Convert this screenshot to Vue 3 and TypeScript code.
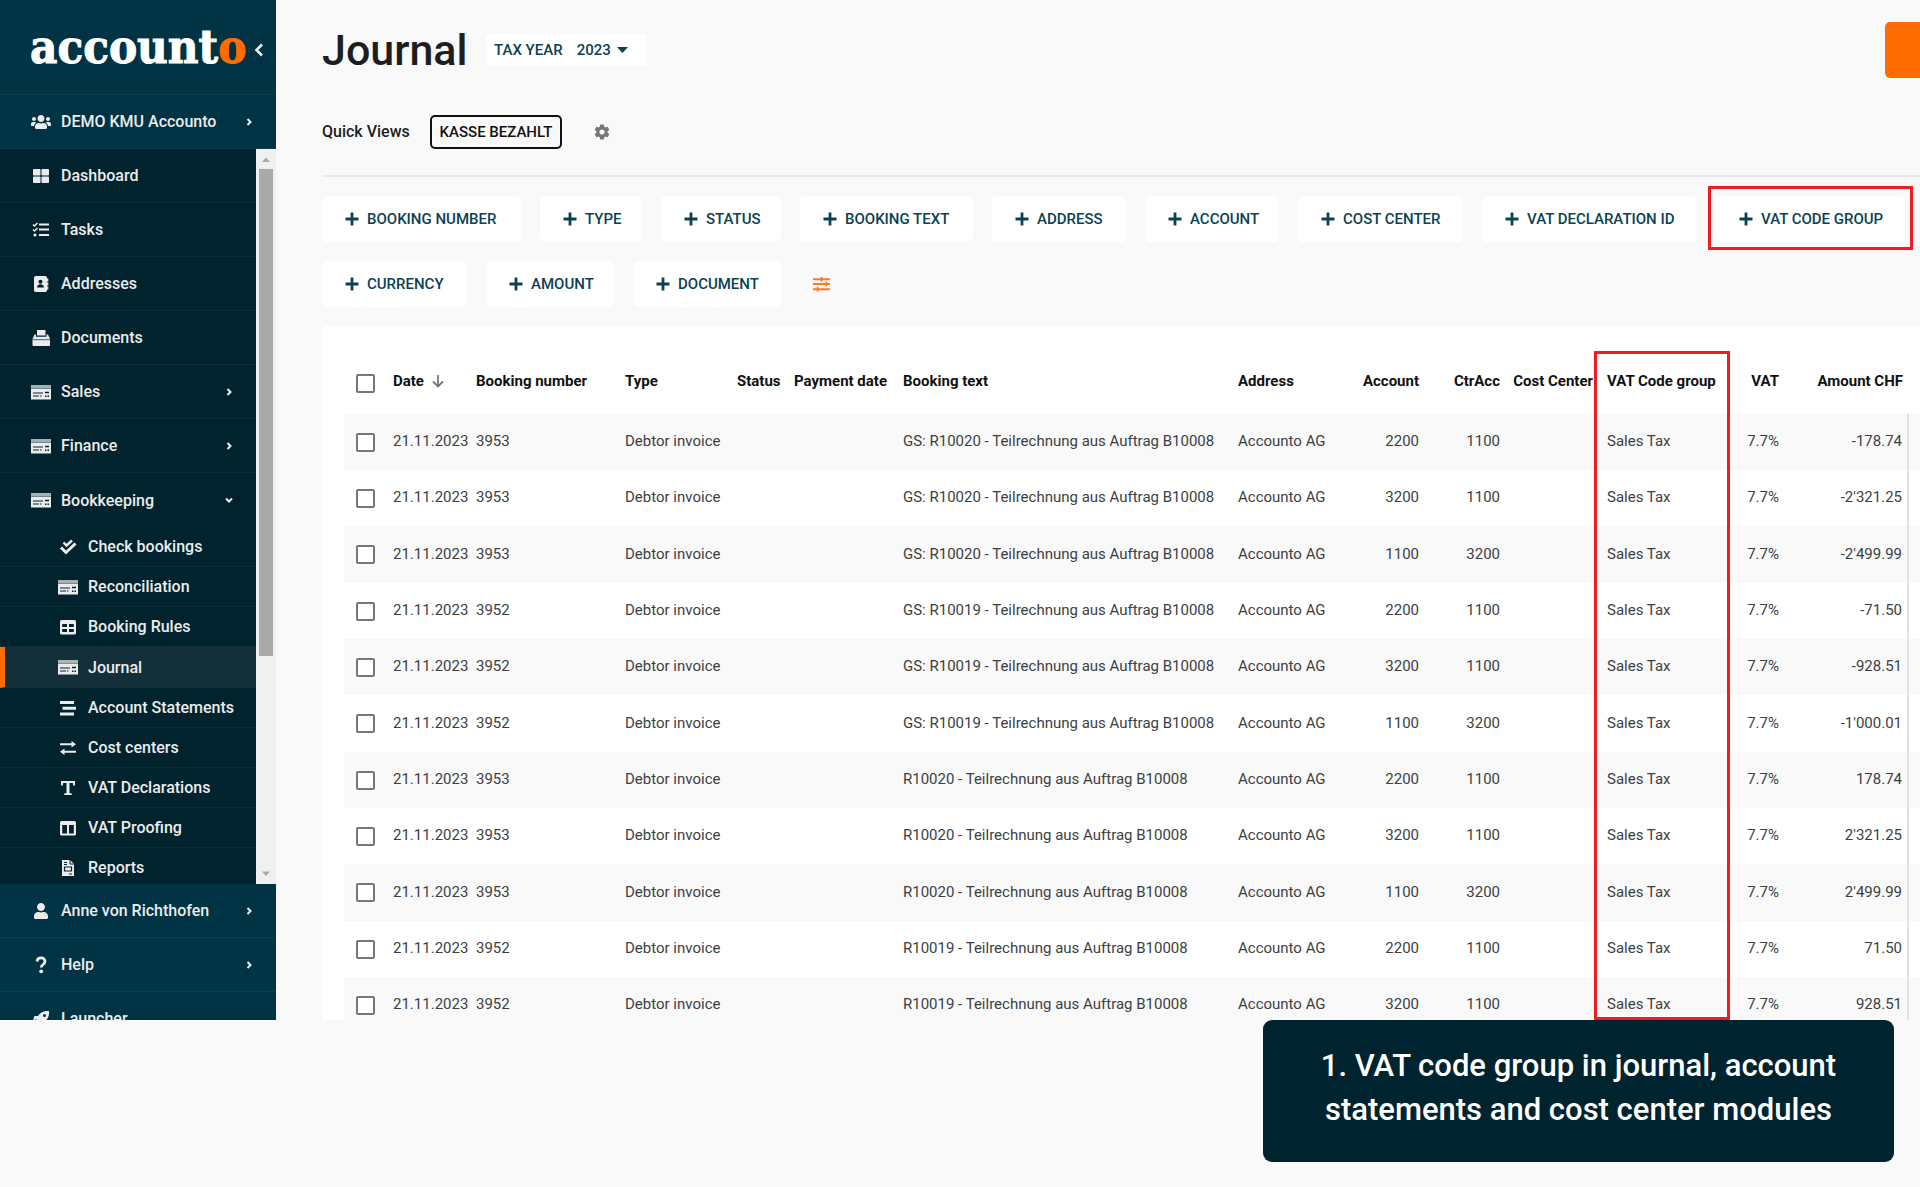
<script setup lang="ts">
import { ref } from 'vue'

interface NavItem {
  label: string
  icon: string
  chevron?: 'right' | 'down'
  active?: boolean
}

interface Filter {
  label: string
  width: number
  marked?: boolean
}

interface Booking {
  number: string
  text: string
  account: string
  contra: string
  amount: string
}

const cut = '#00232e'

const icons: Record<string, string> = {
  users:
    '<g transform="translate(0 2) scale(0.03125)"><path d="M96 224c35.3 0 64-28.7 64-64s-28.7-64-64-64-64 28.7-64 64 28.7 64 64 64zm448 0c35.3 0 64-28.7 64-64s-28.7-64-64-64-64 28.7-64 64 28.7 64 64 64zm32 32h-64c-17.6 0-33.5 7.1-45.1 18.6 40.3 22.1 68.9 62 75.1 109.4h66c17.7 0 32-14.3 32-32v-32c0-35.3-28.7-64-64-64zm-256 0c61.9 0 112-50.1 112-112S381.9 32 320 32 208 82.1 208 144s50.1 112 112 112zm76.8 32h-8.3c-20.8 10-43.9 16-68.5 16s-47.6-6-68.5-16h-8.3C179.6 288 128 339.6 128 403.2V432c0 26.5 21.5 48 48 48h288c26.5 0 48-21.5 48-48v-28.8c0-63.6-51.6-115.2-115.2-115.2zm-223.7-13.4C161.5 263.1 145.6 256 128 256H64c-35.3 0-64 28.7-64 64v32c0 17.7 14.3 32 32 32h65.9c6.3-47.4 34.9-87.3 75.2-109.4z"/></g>',
  user:
    '<g transform="translate(3 2) scale(0.03125)"><path d="M224 256c70.7 0 128-57.3 128-128S294.7 0 224 0 96 57.3 96 128s57.3 128 128 128zm89.6 32h-16.7c-22.2 10.2-46.9 16-72.9 16s-50.6-5.8-72.9-16h-16.7C60.2 288 0 348.2 0 422.4V464c0 26.5 21.5 48 48 48h352c26.5 0 48-21.5 48-48v-41.6c0-74.2-60.2-134.4-134.4-134.4z"/></g>',
  dashboard:
    '<rect x="2" y="3" width="7.5" height="6.5" rx="0.8"/><rect x="10.5" y="3" width="7.5" height="6.5" rx="0.8"/><rect x="2" y="10.5" width="7.5" height="6.5" rx="0.8"/><rect x="10.5" y="10.5" width="7.5" height="6.5" rx="0.8"/>',
  tasks:
    '<path d="M8 4.500H18M8 9.500H18M8 15H18" stroke="currentColor" stroke-width="2.200"/><path d="M2 4.500l1.500 1.500L6.500 3M2 9.500L3.500 11L6.500 8" fill="none" stroke="currentColor" stroke-width="1.500"/><circle cx="4" cy="15" r="1.600"/>',
  address:
    `<rect x="3" y="2" width="13" height="16" rx="1.800"/><path d="M16 4.500h1.300v3H16zM16 8.500h1.300v3H16zM16 12.500h1.300v3H16z"/><circle cx="9.500" cy="7.800" r="2" fill="${cut}"/><path d="M6 13.500c0-4.500 7-4.500 7 0z" fill="${cut}"/>`,
  documents:
    `<path d="M6 2h8.500v5.500H6zM1.500 11L3.500 6.500H5V8.700h10.500V6.500H17L19 11v6a1 1 0 0 1-1 1H2.500a1 1 0 0 1-1-1z"/><path d="M1.500 11.700H19" stroke="${cut}" stroke-width="0.700"/>`,
  card:
    `<path d="M0 6.500h20v11H0z"/><path d="M0 3h20v3H0z" opacity="0.700"/><path d="M2 11h10M2 14h6M9 14h1.500" stroke="${cut}" stroke-width="1"/><path d="M14 10.500h4M14 14.300h1.500M16.500 14.300H18" stroke="${cut}" stroke-width="1.600"/>`,
  check:
    '<path d="M3 10.500l5 5L17.500 6.500" fill="none" stroke="currentColor" stroke-width="3"/><path d="M5.500 5.500L8.500 8.500L14 3.500" fill="none" stroke="currentColor" stroke-width="2.400"/>',
  table:
    `<rect x="2" y="3" width="16" height="14.500" rx="1.500"/><path d="M4.200 7h4.800v3H4.200zM11 7h4.800v3H11zM4.200 12h4.800v3H4.200zM11 12h4.800v3H11z" fill="${cut}"/>`,
  stagger:
    '<path d="M2 3h14v3H2zM4.500 8.700H18v3H4.500zM2 14.500h14v3H2z"/>',
  exchange:
    '<path d="M2 5.200h11.500V3L18 6.300L13.500 9.500V7.300H2zM18 12.700H6.500V10.500L2 13.700L6.500 17v-2.200H18z"/>',
  letter:
    '<path d="M3 3h14v4.500h-1.800L14.800 5H11.500v10.200h2.200V17H6.300v-1.800h2.200V5H5.200L4.800 7.500H3z"/>',
  columns:
    `<rect x="2" y="3" width="16" height="14.500" rx="1.500"/><path d="M4.200 7h4.800v8.500H4.200zM11 7h4.800v8.500H11z" fill="${cut}"/>`,
  report:
    `<path d="M4 2h8l4 4v12H4z"/><path d="M12 2v4h4M6 4.500h3M6 6.500h3M11 16h3" fill="none" stroke="${cut}" stroke-width="1"/><path d="M6.500 9h7v4h-7z" fill="none" stroke="${cut}" stroke-width="1.200"/>`,
  question:
    '<path d="M6 6.500C6.500 1.500 14 2 14 6.500C14 9.500 10.200 9.500 10.200 12.500" fill="none" stroke="currentColor" stroke-width="2.800"/><circle cx="10.200" cy="16.300" r="1.900"/>',
  rocket:
    `<path d="M18 2C12 1.500 9 4 7 7H3.500L2 11l3.500-.5L9.500 14.500L9 18l4-1.500V13C16.500 10.500 18.500 7.500 18 2z"/><circle cx="13.500" cy="6.500" r="1.500" fill="#003343"/><path d="M2 18c0-3 1-4.500 3.500-4l1 1C7 17.500 5 18 2 18z"/>`,
}

const mainNav: NavItem[] = [
  { label: 'Dashboard', icon: 'dashboard' },
  { label: 'Tasks', icon: 'tasks' },
  { label: 'Addresses', icon: 'address' },
  { label: 'Documents', icon: 'documents' },
  { label: 'Sales', icon: 'card', chevron: 'right' },
  { label: 'Finance', icon: 'card', chevron: 'right' },
  { label: 'Bookkeeping', icon: 'card', chevron: 'down' },
]

const subNav: NavItem[] = [
  { label: 'Check bookings', icon: 'check' },
  { label: 'Reconciliation', icon: 'card' },
  { label: 'Booking Rules', icon: 'table' },
  { label: 'Journal', icon: 'card', active: true },
  { label: 'Account Statements', icon: 'stagger' },
  { label: 'Cost centers', icon: 'exchange' },
  { label: 'VAT Declarations', icon: 'letter' },
  { label: 'VAT Proofing', icon: 'columns' },
  { label: 'Reports', icon: 'report' },
]

const footNav: NavItem[] = [
  { label: 'Anne von Richthofen', icon: 'user', chevron: 'right' },
  { label: 'Help', icon: 'question', chevron: 'right' },
  { label: 'Launcher', icon: 'rocket' },
]

const filterRows: Filter[][] = [
  [
    { label: 'Booking number', width: 199 },
    { label: 'Type', width: 102 },
    { label: 'Status', width: 120 },
    { label: 'Booking text', width: 173 },
    { label: 'Address', width: 134 },
    { label: 'Account', width: 134 },
    { label: 'Cost center', width: 165 },
    { label: 'VAT declaration ID', width: 215 },
    { label: 'VAT code group', width: 189, marked: true },
  ],
  [
    { label: 'Currency', width: 145 },
    { label: 'Amount', width: 128 },
    { label: 'Document', width: 148 },
  ],
]

const creditNote20 = 'GS: R10020 - Teilrechnung aus Auftrag B10008'
const creditNote19 = 'GS: R10019 - Teilrechnung aus Auftrag B10008'
const invoice20 = 'R10020 - Teilrechnung aus Auftrag B10008'
const invoice19 = 'R10019 - Teilrechnung aus Auftrag B10008'

const bookings: Booking[] = [
  { number: '3953', text: creditNote20, account: '2200', contra: '1100', amount: "-178.74" },
  { number: '3953', text: creditNote20, account: '3200', contra: '1100', amount: "-2'321.25" },
  { number: '3953', text: creditNote20, account: '1100', contra: '3200', amount: "-2'499.99" },
  { number: '3952', text: creditNote19, account: '2200', contra: '1100', amount: "-71.50" },
  { number: '3952', text: creditNote19, account: '3200', contra: '1100', amount: "-928.51" },
  { number: '3952', text: creditNote19, account: '1100', contra: '3200', amount: "-1'000.01" },
  { number: '3953', text: invoice20, account: '2200', contra: '1100', amount: "178.74" },
  { number: '3953', text: invoice20, account: '3200', contra: '1100', amount: "2'321.25" },
  { number: '3953', text: invoice20, account: '1100', contra: '3200', amount: "2'499.99" },
  { number: '3952', text: invoice19, account: '2200', contra: '1100', amount: "71.50" },
  { number: '3952', text: invoice19, account: '3200', contra: '1100', amount: "928.51" },
]

const taxYear = ref('2023')
</script>

<template>
  <div class="page">
    <div class="app">
      <aside class="sidebar">
        <div class="brand">
          <a href="#" class="logo">account<span class="logo-end">o</span></a>
          <button class="collapse" aria-label="Collapse menu">
            <svg width="10" height="14" viewBox="0 0 10 14"><path d="M8 1.500L2.500 7L8 12.500" fill="none" stroke="currentColor" stroke-width="2.600" /></svg>
          </button>
        </div>
        <a href="#" class="nav-item company">
          <svg class="icon" viewBox="0 0 20 20" v-html="icons.users"></svg>
          <span class="nav-label">DEMO KMU Accounto</span>
          <svg class="chevron" viewBox="0 0 10 10"><path d="M3.500 2l3 3-3 3" /></svg>
        </a>
        <div class="scroll-area">
          <nav class="nav">
            <a v-for="item in mainNav" :key="item.label" href="#" class="nav-item">
              <svg class="icon" viewBox="0 0 20 20" v-html="icons[item.icon]"></svg>
              <span class="nav-label">{{ item.label }}</span>
              <svg v-if="item.chevron" class="chevron" viewBox="0 0 10 10">
                <path :d="item.chevron === 'right' ? 'M3.500 2l3 3-3 3' : 'M2 3.500l3 3 3-3'" />
              </svg>
            </a>
            <a v-for="item in subNav" :key="item.label" href="#" class="sub-item" :class="{ active: item.active }">
              <svg class="icon" viewBox="0 0 20 20" v-html="icons[item.icon]"></svg>
              <span class="nav-label">{{ item.label }}</span>
            </a>
          </nav>
          <div class="scrollbar" aria-hidden="true">
            <svg class="scroll-arrow" viewBox="0 0 20 20"><path d="M6 13l4-4.500 4 4.500z" /></svg>
            <div class="scroll-track"><div class="scroll-thumb"></div></div>
            <svg class="scroll-arrow" viewBox="0 0 20 20"><path d="M6 7.500l4 4.500 4-4.500z" /></svg>
          </div>
        </div>
        <nav class="foot-nav">
          <a v-for="item in footNav" :key="item.label" href="#" class="nav-item">
            <svg class="icon" viewBox="0 0 20 20" v-html="icons[item.icon]"></svg>
            <span class="nav-label">{{ item.label }}</span>
            <svg v-if="item.chevron" class="chevron" viewBox="0 0 10 10"><path d="M3.500 2l3 3-3 3" /></svg>
          </a>
        </nav>
      </aside>

      <main class="main">
        <header class="title-bar">
          <h1>Journal</h1>
          <button class="tax-year">
            <span>TAX YEAR</span>
            <span class="year">{{ taxYear }}</span>
            <svg width="11" height="6" viewBox="0 0 11 6"><path d="M0 0h11L5.500 6z" fill="currentColor" /></svg>
          </button>
          <button class="primary" aria-label="New booking"></button>
        </header>

        <section class="quick-views">
          <span class="quick-label">Quick Views</span>
          <button class="quick-chip">KASSE BEZAHLT</button>
          <button class="gear" aria-label="Settings">
            <svg width="18" height="18" viewBox="0 0 24 24"><path fill="currentColor" d="M19.430 12.980c.04-.32.07-.64.07-.98s-.03-.66-.07-.98l2.110-1.650c.19-.15.24-.42.12-.64l-2-3.460c-.12-.22-.39-.3-.61-.22l-2.490 1c-.52-.4-1.080-.73-1.690-.98l-.38-2.650C14.460 2.180 14.250 2 14 2h-4c-.25 0-.46.18-.49.42l-.38 2.650c-.61.25-1.170.59-1.690.98l-2.490-1c-.23-.09-.49 0-.61.22l-2 3.460c-.13.22-.07.49.12.64l2.110 1.650c-.04.32-.07.65-.07.98s.03.66.07.98l-2.110 1.650c-.19.15-.24.42-.12.64l2 3.460c.12.22.39.3.61.22l2.490-1c.52.4 1.080.73 1.690.98l.38 2.650c.03.24.24.42.49.42h4c.25 0 .46-.18.49-.42l.38-2.650c.61-.25 1.170-.59 1.690-.98l2.490 1c.23.09.49 0 .61-.22l2-3.460c.12-.22.07-.49-.12-.64l-2.110-1.650zM12 15.500c-1.930 0-3.500-1.570-3.500-3.500s1.570-3.500 3.500-3.500 3.500 1.570 3.500 3.500-1.570 3.500-3.500 3.500z" /></svg>
          </button>
        </section>

        <section class="filters">
          <div v-for="(row, index) in filterRows" :key="index" class="filter-row">
            <button
              v-for="filter in row"
              :key="filter.label"
              class="filter"
              :class="{ marked: filter.marked }"
              :style="{ width: filter.width + 'px' }"
            >
              <svg width="14" height="14" viewBox="0 0 14 14"><path d="M7 0.500v13M0.500 7h13" stroke="currentColor" stroke-width="2.800" /></svg>
              <span>{{ filter.label }}</span>
            </button>
            <button v-if="index === 1" class="tune" aria-label="Adjust filters">
              <svg width="17" height="16" viewBox="0 0 18 16"><path d="M0 3h18M0 8h18M0 13.500h18" stroke="currentColor" stroke-width="2.200" /><path d="M9 0.500v5M14 5.500v5M5 11v5" stroke="currentColor" stroke-width="2" /></svg>
            </button>
          </div>
        </section>

        <section class="card">
          <table>
            <colgroup>
              <col class="c-check" /><col class="c-date" /><col class="c-number" /><col class="c-type" />
              <col class="c-status" /><col class="c-payment" /><col /><col class="c-address" />
              <col class="c-account" /><col class="c-contra" /><col class="c-cost" /><col class="c-group" />
              <col class="c-vat" /><col class="c-amount" /><col class="c-tail" />
            </colgroup>
            <thead>
              <tr>
                <th class="check"><input type="checkbox" aria-label="Select all" /></th>
                <th>
                  <span class="sort">Date
                    <svg width="12" height="14" viewBox="0 0 12 14"><path d="M6 1v11M1 7.500l5 5 5-5" fill="none" stroke="#777" stroke-width="1.800" /></svg>
                  </span>
                </th>
                <th>Booking number</th>
                <th>Type</th>
                <th>Status</th>
                <th>Payment date</th>
                <th>Booking text</th>
                <th>Address</th>
                <th class="num">Account</th>
                <th class="num">CtrAcc</th>
                <th class="num cost">Cost Center</th>
                <th>VAT Code group</th>
                <th class="num">VAT</th>
                <th class="num amount">Amount CHF</th>
                <th></th>
              </tr>
            </thead>
            <tbody>
              <tr v-for="(booking, index) in bookings" :key="index">
                <td class="check"><input type="checkbox" :aria-label="'Select booking ' + booking.number" /></td>
                <td>21.11.2023</td>
                <td>{{ booking.number }}</td>
                <td>Debtor invoice</td>
                <td></td>
                <td></td>
                <td>{{ booking.text }}</td>
                <td>Accounto AG</td>
                <td class="num">{{ booking.account }}</td>
                <td class="num">{{ booking.contra }}</td>
                <td></td>
                <td>Sales Tax</td>
                <td class="num">7.7%</td>
                <td class="num amount">{{ booking.amount }}</td>
                <td class="tail"></td>
              </tr>
            </tbody>
          </table>
          <div class="column-mark" aria-hidden="true"></div>
        </section>
      </main>
    </div>

    <footer class="caption-area">
      <p class="caption">1. VAT code group in journal, account<br />statements and cost center modules</p>
    </footer>
  </div>
</template>

<style>
body {
  margin: 0;
  background: #f9f9f9;
}
</style>

<style scoped>
* {
  box-sizing: border-box;
}

.page {
  display: flex;
  flex-direction: column;
  height: 100vh;
  overflow: hidden;
  background: #f9f9f9;
  font-family: Roboto, "Open Sans", sans-serif;
  font-size: 15px;
  color: #1c1e20;
}

button {
  font: inherit;
  color: inherit;
  border: 0;
  padding: 0;
  background: none;
}

a {
  color: inherit;
  text-decoration: none;
}

.app {
  display: flex;
  flex: 1;
  min-height: 0;
  overflow: hidden;
}

/* Sidebar */
.sidebar {
  display: flex;
  flex-direction: column;
  flex: 0 0 276px;
  background: #003343;
  color: #ececec;
  font-size: 16px;
  font-weight: 500;
}

.brand {
  display: flex;
  align-items: center;
  flex: 0 0 95px;
  padding: 0 12px 0 30px;
  justify-content: space-between;
  border-bottom: 1px solid #0d3c4a;
}

.logo {
  font-family: "DejaVu Serif Condensed", "DejaVu Serif", serif;
  font-size: 47px;
  line-height: 52px;
  font-weight: 700;
  color: #fff;
  -webkit-text-stroke: 1px currentColor;
}

.logo-end {
  color: #ff6c00;
}

.collapse {
  display: flex;
  padding-top: 6px;
}

.nav-item {
  display: flex;
  align-items: center;
  flex: 0 0 54px;
  height: 54px;
  padding: 0 22px 0 31px;
  gap: 10px;
  border-bottom: 1px solid #0b2d38;
}

.company,
.foot-nav .nav-item {
  border-bottom-color: #0d3c4a;
}

.nav .nav-item:nth-child(7) {
  border-bottom: 0;
}

.icon {
  flex: 0 0 20px;
  width: 20px;
  height: 20px;
  fill: currentColor;
}

.nav-label {
  flex: 1;
  white-space: nowrap;
}

.chevron {
  width: 10px;
  height: 10px;
  fill: none;
  stroke: currentColor;
  stroke-width: 2;
}

.scroll-area {
  display: flex;
  flex: 1;
  min-height: 0;
  overflow: hidden;
}

.nav {
  display: flex;
  flex-direction: column;
  flex: 1;
  background: #00232e;
}

.sub-item {
  display: flex;
  align-items: center;
  flex: 0 0 40px;
  padding-left: 58px;
  gap: 10px;
  border-bottom: 1px solid #0b2d38;
}

.sub-item.active {
  flex-basis: 41px;
  padding-left: 53px;
  border-left: 5px solid #ff6c00;
  background: #13303a;
}

.scrollbar {
  display: flex;
  flex-direction: column;
  flex: 0 0 20px;
  background: #f0f0f0;
}

.scroll-arrow {
  width: 20px;
  height: 20px;
  fill: #a9a9a9;
}

.scroll-track {
  flex: 1;
  padding: 0 3px;
}

.scroll-thumb {
  height: 70%;
  background: #a9a9a9;
}

.foot-nav {
  display: flex;
  flex-direction: column;
  flex: 0 0 136px;
  overflow: hidden;
}

/* Main column */
.main {
  display: flex;
  flex-direction: column;
  flex: 1;
  min-width: 0;
  padding-left: 46px;
}

.title-bar {
  display: flex;
  align-items: center;
  height: 56px;
  margin-top: 22px;
}

h1 {
  margin: 0;
  font-size: 43px;
  line-height: 56px;
  font-weight: 500;
  width: 164px;
}

.tax-year {
  display: flex;
  align-items: center;
  height: 32px;
  width: 161px;
  padding-left: 8px;
  border-radius: 4px;
  background: #fff;
  color: #0b4252;
  font-weight: 500;
}

.year {
  margin: 0 6px 0 14px;
}

.primary {
  width: 35px;
  height: 56px;
  margin-left: auto;
  border-radius: 5px 0 0 5px;
  background: #ff6c00;
}

.quick-views {
  display: flex;
  align-items: center;
  height: 99px;
  padding-top: 10px;
  border-bottom: 2px solid #e9e9e9;
}

.quick-label {
  width: 108px;
  font-size: 16px;
  font-weight: 500;
}

.quick-chip {
  width: 132px;
  height: 34px;
  border: 2px solid #111;
  border-radius: 5px;
  font-weight: 500;
  color: #111;
}

.gear {
  display: flex;
  margin-left: 31px;
  color: #777;
}

.filters {
  display: flex;
  flex-direction: column;
  gap: 19px;
  padding: 19px 0;
}

.filter-row {
  display: flex;
  gap: 19px;
}

.filter {
  display: flex;
  position: relative;
  align-items: center;
  height: 46px;
  padding-left: 23px;
  gap: 8px;
  border-radius: 5px;
  background: #fff;
  color: #0b4252;
  font-weight: 500;
  text-transform: uppercase;
  white-space: nowrap;
}

.filter.marked::after {
  content: "";
  position: absolute;
  inset: -10px -8px -8px;
  border: 3px solid #ee1c25;
}

.tune {
  display: flex;
  align-items: center;
  margin-left: 13px;
  color: #ff7a1a;
}

/* Journal table */
.card {
  position: relative;
  flex: 1;
  min-height: 0;
  overflow: hidden;
  padding-left: 22px;
  border-radius: 5px 0 0 0;
  background: #fff;
}

table {
  width: 100%;
  table-layout: fixed;
  border-collapse: collapse;
}

.c-check { width: 49px; }
.c-date { width: 83px; }
.c-number { width: 149px; }
.c-type { width: 112px; }
.c-status { width: 57px; }
.c-payment { width: 109px; }
.c-address { width: 112px; }
.c-account { width: 69px; }
.c-contra { width: 81px; }
.c-cost { width: 107px; }
.c-group { width: 123px; }
.c-vat { width: 49px; }
.c-amount { width: 129px; }
.c-tail { width: 12px; }

th,
td {
  padding: 0 0 2px;
  text-align: left;
  white-space: nowrap;
}

th {
  height: 88px;
  padding-top: 26px;
  padding-bottom: 4px;
  font-weight: 700;
  color: #111;
}

td {
  height: 56px;
  color: #3c3f41;
}

tbody tr:nth-child(3n) td {
  height: 57px;
}

tbody tr:nth-child(odd) {
  background: #f9f9f9;
}

.num {
  text-align: right;
}

.cost {
  padding-right: 14px;
}

.amount {
  padding-right: 5px;
}

.tail {
  border-left: 2px solid #dde3e6;
}

.check {
  padding-left: 12px;
  padding-bottom: 0;
}

input[type="checkbox"] {
  display: block;
  appearance: none;
  width: 19px;
  height: 19px;
  margin: 0;
  border: 2px solid #777;
  border-radius: 2px;
  background: #fff;
}

.sort {
  display: flex;
  align-items: center;
  gap: 8px;
}

.column-mark {
  position: absolute;
  top: 25px;
  right: 190px;
  bottom: 0;
  width: 136px;
  border: 3px solid #ee1c25;
}

/* Caption */
.caption-area {
  display: flex;
  justify-content: flex-end;
  padding: 0 26px 25px;
}

.caption {
  width: 631px;
  margin: 0;
  padding: 24px 16px 30px;
  border-radius: 9px;
  background: #00242f;
  color: #fff;
  font-size: 31px;
  line-height: 44px;
  font-weight: 500;
  text-align: center;
}
</style>
